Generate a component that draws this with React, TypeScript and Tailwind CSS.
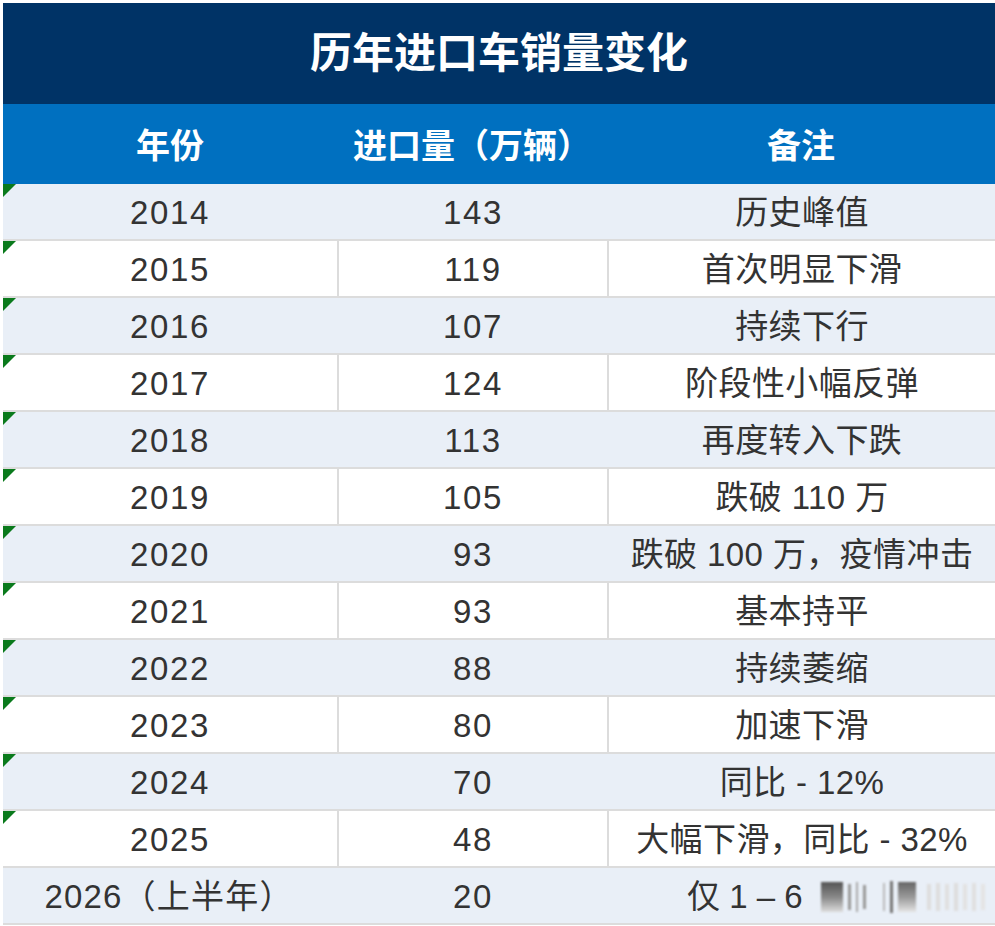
const rows = [
  { year: "2014", qty: "143", note: "历史峰值" },
  { year: "2015", qty: "119", note: "首次明显下滑" },
  { year: "2016", qty: "107", note: "持续下行" },
  { year: "2017", qty: "124", note: "阶段性小幅反弹" },
  { year: "2018", qty: "113", note: "再度转入下跌" },
  { year: "2019", qty: "105", note: "跌破 110 万" },
  { year: "2020", qty: "93", note: "跌破 100 万，疫情冲击" },
  { year: "2021", qty: "93", note: "基本持平" },
  { year: "2022", qty: "88", note: "持续萎缩" },
  { year: "2023", qty: "80", note: "加速下滑" },
  { year: "2024", qty: "70", note: "同比 - 12%" },
  { year: "2025", qty: "48", note: "大幅下滑，同比 - 32%" },
];

// blurred watermark covering the end of the last note
const Watermark = () => (
  <span className="inline-flex items-center h-[34px] ml-[18px] gap-[5px] blur-[1.2px] align-middle">
    <span className="w-[22px] h-[30px] bg-gradient-to-b from-[#555] via-[#888] to-[#ddd]" />
    <span className="w-[3px] h-[26px] bg-[#999]" />
    <span className="w-[2px] h-[30px] bg-[#aaa]" />
    <span className="w-[3px] h-[24px] bg-[#999]" />
    <span className="w-[2px] h-[28px] bg-[#bbb] ml-[12px]" />
    <span className="w-[3px] h-[32px] bg-[#777]" />
    <span className="w-[18px] h-[30px] bg-gradient-to-b from-[#666] via-[#999] to-[#e5e5e5]" />
    <span className="w-[4px] h-[26px] bg-[#ddd] ml-[6px]" />
    <span className="w-[4px] h-[28px] bg-[#ddd]" />
    <span className="w-[4px] h-[26px] bg-[#e0e0e0]" />
    <span className="w-[4px] h-[28px] bg-[#ddd]" />
    <span className="w-[4px] h-[26px] bg-[#e2e2e2]" />
    <span className="w-[4px] h-[28px] bg-[#e0e0e0]" />
    <span className="w-[4px] h-[26px] bg-[#e4e4e4]" />
  </span>
);

const App = () => {
  return (
    <div
      className="w-[995px] h-[926px] bg-white pt-[3px] pl-[3px] overflow-hidden text-[#333]"
      style={{ fontFamily: '"Liberation Sans", "Noto Sans CJK SC", sans-serif' }}
    >
      {/* Title */}
      <div className="h-[101px] bg-[#003366] flex items-center justify-center text-white font-bold text-[42px]">
        历年进口车销量变化
      </div>

      {/* Header */}
      <div className="h-[80px] bg-[#0070c0] grid grid-cols-[334px_270px_1fr] items-center pt-[4px] text-white font-bold text-[34px]">
        <div className="text-center">年份</div>
        <div className="text-center">进口量（万辆）</div>
        <div className="text-center">备注</div>
      </div>

      {/* Body */}
      <div>
        {rows.map((r, i) => {
          const striped = i % 2 === 0;
          return (
            <div
              key={r.year}
              className={`relative h-[57px] grid grid-cols-[334px_270px_1fr] items-center text-[33px] border-b-2 border-[#dcdcdc] ${
                striped ? "bg-[#e9eff7]" : "bg-white"
              }`}
            >
              <span className="absolute left-0 top-0 w-0 h-0 border-t-[13px] border-r-[13px] border-t-[#0a7a1c] border-r-transparent" />
              <div className="text-center pt-[3px] tracking-[1.6px]">{r.year}</div>
              <div
                className={`h-full flex items-center justify-center pt-[3px] tracking-[1.6px] border-l-2 ${
                  striped ? "border-transparent" : "border-[#dcdcdc]"
                }`}
              >
                {r.qty}
              </div>
              <div
                className={`h-full flex items-center justify-center pt-[3px] whitespace-nowrap tracking-[0.4px] border-l-2 ${
                  striped ? "border-transparent" : "border-[#dcdcdc]"
                }`}
              >
                {r.note}
              </div>
            </div>
          );
        })}
        <div className="h-[57px] grid grid-cols-[334px_270px_1fr] items-center text-[33px] bg-[#e9eff7] border-b-2 border-[#dcdcdc]">
          <div className="text-center pt-[3px] pr-[2px] tracking-[1.2px]">2026（上半年）</div>
          <div className="h-full flex items-center justify-center pt-[3px] tracking-[1.6px] border-l-2 border-transparent">20</div>
          <div className="h-full flex items-center pt-[3px] pl-[78px] whitespace-nowrap border-l-2 border-transparent">
            仅 1 – 6
            <Watermark />
          </div>
        </div>
      </div>
    </div>
  );
};

export default App;
